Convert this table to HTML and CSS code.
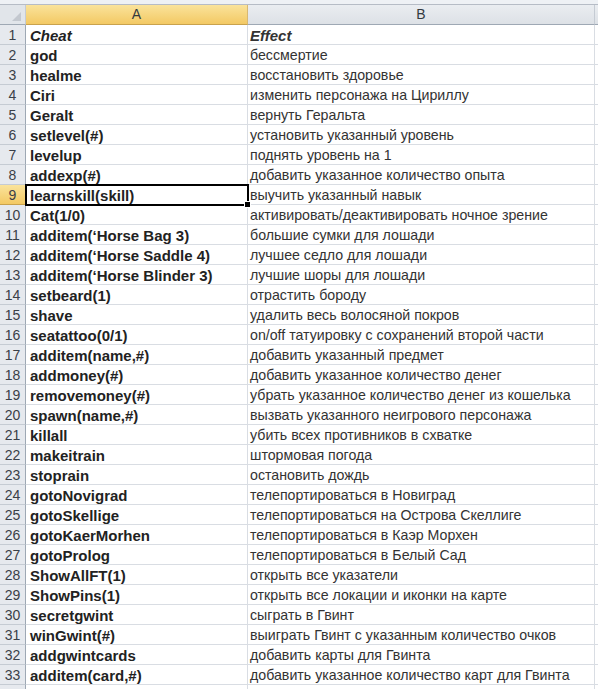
FILE: index.html
```html
<!DOCTYPE html>
<html>
<head>
<meta charset="utf-8">
<link rel="stylesheet" href="styles.css">
</head>
<body>
<div class="sheet">
  <div class="topstrip"></div>
  <div class="row hdr">
    <div class="corner"><span class="tri"></span></div>
    <div class="colhdr sel">A</div>
    <div class="colhdr">B</div>
    <div class="colhdr end"></div>
  </div>
  <div class="row"><div class="rh">1</div><div class="c a ital">Cheat</div><div class="c b ital bold">Effect</div><div class="c e"></div></div>
  <div class="row"><div class="rh">2</div><div class="c a">god</div><div class="c b">бессмертие</div><div class="c e"></div></div>
  <div class="row"><div class="rh">3</div><div class="c a">healme</div><div class="c b">восстановить здоровье</div><div class="c e"></div></div>
  <div class="row"><div class="rh">4</div><div class="c a">Ciri</div><div class="c b">изменить персонажа на Цириллу</div><div class="c e"></div></div>
  <div class="row"><div class="rh">5</div><div class="c a">Geralt</div><div class="c b">вернуть Геральта</div><div class="c e"></div></div>
  <div class="row"><div class="rh">6</div><div class="c a">setlevel(#)</div><div class="c b">установить указанный уровень</div><div class="c e"></div></div>
  <div class="row"><div class="rh">7</div><div class="c a">levelup</div><div class="c b">поднять уровень на 1</div><div class="c e"></div></div>
  <div class="row"><div class="rh">8</div><div class="c a">addexp(#)</div><div class="c b">добавить указанное количество опыта</div><div class="c e"></div></div>
  <div class="row"><div class="rh sel">9</div><div class="c a active">learnskill(skill)<span class="handle"></span></div><div class="c b">выучить указанный навык</div><div class="c e"></div></div>
  <div class="row"><div class="rh">10</div><div class="c a">Cat(1/0)</div><div class="c b">активировать/деактивировать ночное зрение</div><div class="c e"></div></div>
  <div class="row"><div class="rh">11</div><div class="c a">additem(‘Horse Bag 3)</div><div class="c b">большие сумки для лошади</div><div class="c e"></div></div>
  <div class="row"><div class="rh">12</div><div class="c a">additem(‘Horse Saddle 4)</div><div class="c b">лучшее седло для лошади</div><div class="c e"></div></div>
  <div class="row"><div class="rh">13</div><div class="c a">additem(‘Horse Blinder 3)</div><div class="c b">лучшие шоры для лошади</div><div class="c e"></div></div>
  <div class="row"><div class="rh">14</div><div class="c a">setbeard(1)</div><div class="c b">отрастить бороду</div><div class="c e"></div></div>
  <div class="row"><div class="rh">15</div><div class="c a">shave</div><div class="c b">удалить весь волосяной покров</div><div class="c e"></div></div>
  <div class="row"><div class="rh">16</div><div class="c a">seatattoo(0/1)</div><div class="c b">on/off татуировку с сохранений второй части</div><div class="c e"></div></div>
  <div class="row"><div class="rh">17</div><div class="c a">additem(name,#)</div><div class="c b">добавить указанный предмет</div><div class="c e"></div></div>
  <div class="row"><div class="rh">18</div><div class="c a">addmoney(#)</div><div class="c b">добавить указанное количество денег</div><div class="c e"></div></div>
  <div class="row"><div class="rh">19</div><div class="c a">removemoney(#)</div><div class="c b">убрать указанное количество денег из кошелька</div><div class="c e"></div></div>
  <div class="row"><div class="rh">20</div><div class="c a">spawn(name,#)</div><div class="c b">вызвать указанного неигрового персонажа</div><div class="c e"></div></div>
  <div class="row"><div class="rh">21</div><div class="c a">killall</div><div class="c b">убить всех противников в схватке</div><div class="c e"></div></div>
  <div class="row"><div class="rh">22</div><div class="c a">makeitrain</div><div class="c b">штормовая погода</div><div class="c e"></div></div>
  <div class="row"><div class="rh">23</div><div class="c a">stoprain</div><div class="c b">остановить дождь</div><div class="c e"></div></div>
  <div class="row"><div class="rh">24</div><div class="c a">gotoNovigrad</div><div class="c b">телепортироваться в Новиград</div><div class="c e"></div></div>
  <div class="row"><div class="rh">25</div><div class="c a">gotoSkellige</div><div class="c b">телепортироваться на Острова Скеллиге</div><div class="c e"></div></div>
  <div class="row"><div class="rh">26</div><div class="c a">gotoKaerMorhen</div><div class="c b">телепортироваться в Каэр Морхен</div><div class="c e"></div></div>
  <div class="row"><div class="rh">27</div><div class="c a">gotoProlog</div><div class="c b">телепортироваться в Белый Сад</div><div class="c e"></div></div>
  <div class="row"><div class="rh">28</div><div class="c a">ShowAllFT(1)</div><div class="c b">открыть все указатели</div><div class="c e"></div></div>
  <div class="row"><div class="rh">29</div><div class="c a">ShowPins(1)</div><div class="c b">открыть все локации и иконки на карте</div><div class="c e"></div></div>
  <div class="row"><div class="rh">30</div><div class="c a">secretgwint</div><div class="c b">сыграть в Гвинт</div><div class="c e"></div></div>
  <div class="row"><div class="rh">31</div><div class="c a">winGwint(#)</div><div class="c b">выиграть Гвинт с указанным количество очков</div><div class="c e"></div></div>
  <div class="row"><div class="rh">32</div><div class="c a">addgwintcards</div><div class="c b">добавить карты для Гвинта</div><div class="c e"></div></div>
  <div class="row"><div class="rh">33</div><div class="c a">additem(card,#)</div><div class="c b">добавить указанное количество карт для Гвинта</div><div class="c e"></div></div>
  <div class="row last"><div class="rh"></div><div class="c a"></div><div class="c b"></div><div class="c e"></div></div>
</div>
</body>
</html>
```
FILE: styles.css
```css
html, body {
  margin: 0;
  padding: 0;
  background: #ffffff;
}
.sheet {
  width: 598px;
  height: 689px;
  overflow: hidden;
  font-family: "Liberation Sans", Arial, sans-serif;
  font-size: 14px;
  color: #1a1a1a;
}
.topstrip {
  height: 4px;
  background: #eef1f5;
  border-bottom: 1px solid #b6bcc6;
}
.row {
  display: grid;
  grid-template-columns: 26px 222px 347px 3px;
  height: 20px;
}
.row > div {
  box-sizing: border-box;
  height: 20px;
}
.hdr > div {
  border-right: 1px solid #c5cbd3;
  border-bottom: 1px solid #9ea8b4;
  background: linear-gradient(#eaedf1, #dde1e6);
  color: #33393f;
  text-align: center;
  line-height: 19px;
  font-size: 14px;
}
.hdr .corner {
  position: relative;
  background: #e1e5ea;
}
.tri {
  position: absolute;
  right: 4px;
  bottom: 3px;
  width: 0;
  height: 0;
  border-left: 9px solid transparent;
  border-bottom: 9px solid #c3c8cf;
}
.hdr .colhdr.sel {
  background: linear-gradient(#fae39b, #f3c964);
  border-bottom-color: #c9a24d;
  border-right-color: #d7b873;
}
.hdr .end {
  border-right: none;
}
.rh {
  background: #e6e9ee;
  border-right: 1px solid #9ea8b4;
  border-bottom: 1px solid #c5cbd3;
  color: #3a4048;
  text-align: center;
  line-height: 20px;
  font-size: 14px;
}
.rh.sel {
  background: linear-gradient(#fae39b, #f3c964);
  border-bottom-color: #c9a24d;
}
.c {
  border-right: 1px solid #d9dde3;
  border-bottom: 1px solid #d9dde3;
  white-space: nowrap;
  overflow: hidden;
  line-height: 21px;
  padding-left: 3px;
}
.c.a {
  font-weight: bold;
  font-size: 15px;
  color: #222222;
  padding-left: 4px;
  overflow: visible;
}
.c.b {
  color: #333333;
  font-size: 14.2px;
  padding-left: 2px;
}
.c.b.ital {
  font-size: 15px;
}
.c.e {
  border-right: none;
}
.ital {
  font-style: italic;
}
.bold {
  font-weight: bold;
}
.active {
  position: relative;
  outline: 2px solid #000000;
  outline-offset: -1px;
  z-index: 2;
}
.handle {
  position: absolute;
  right: -4px;
  bottom: -4px;
  width: 5px;
  height: 5px;
  background: #000000;
  border: 1px solid #ffffff;
}
.last .c, .last .rh {
  border-bottom: none;
}
```
